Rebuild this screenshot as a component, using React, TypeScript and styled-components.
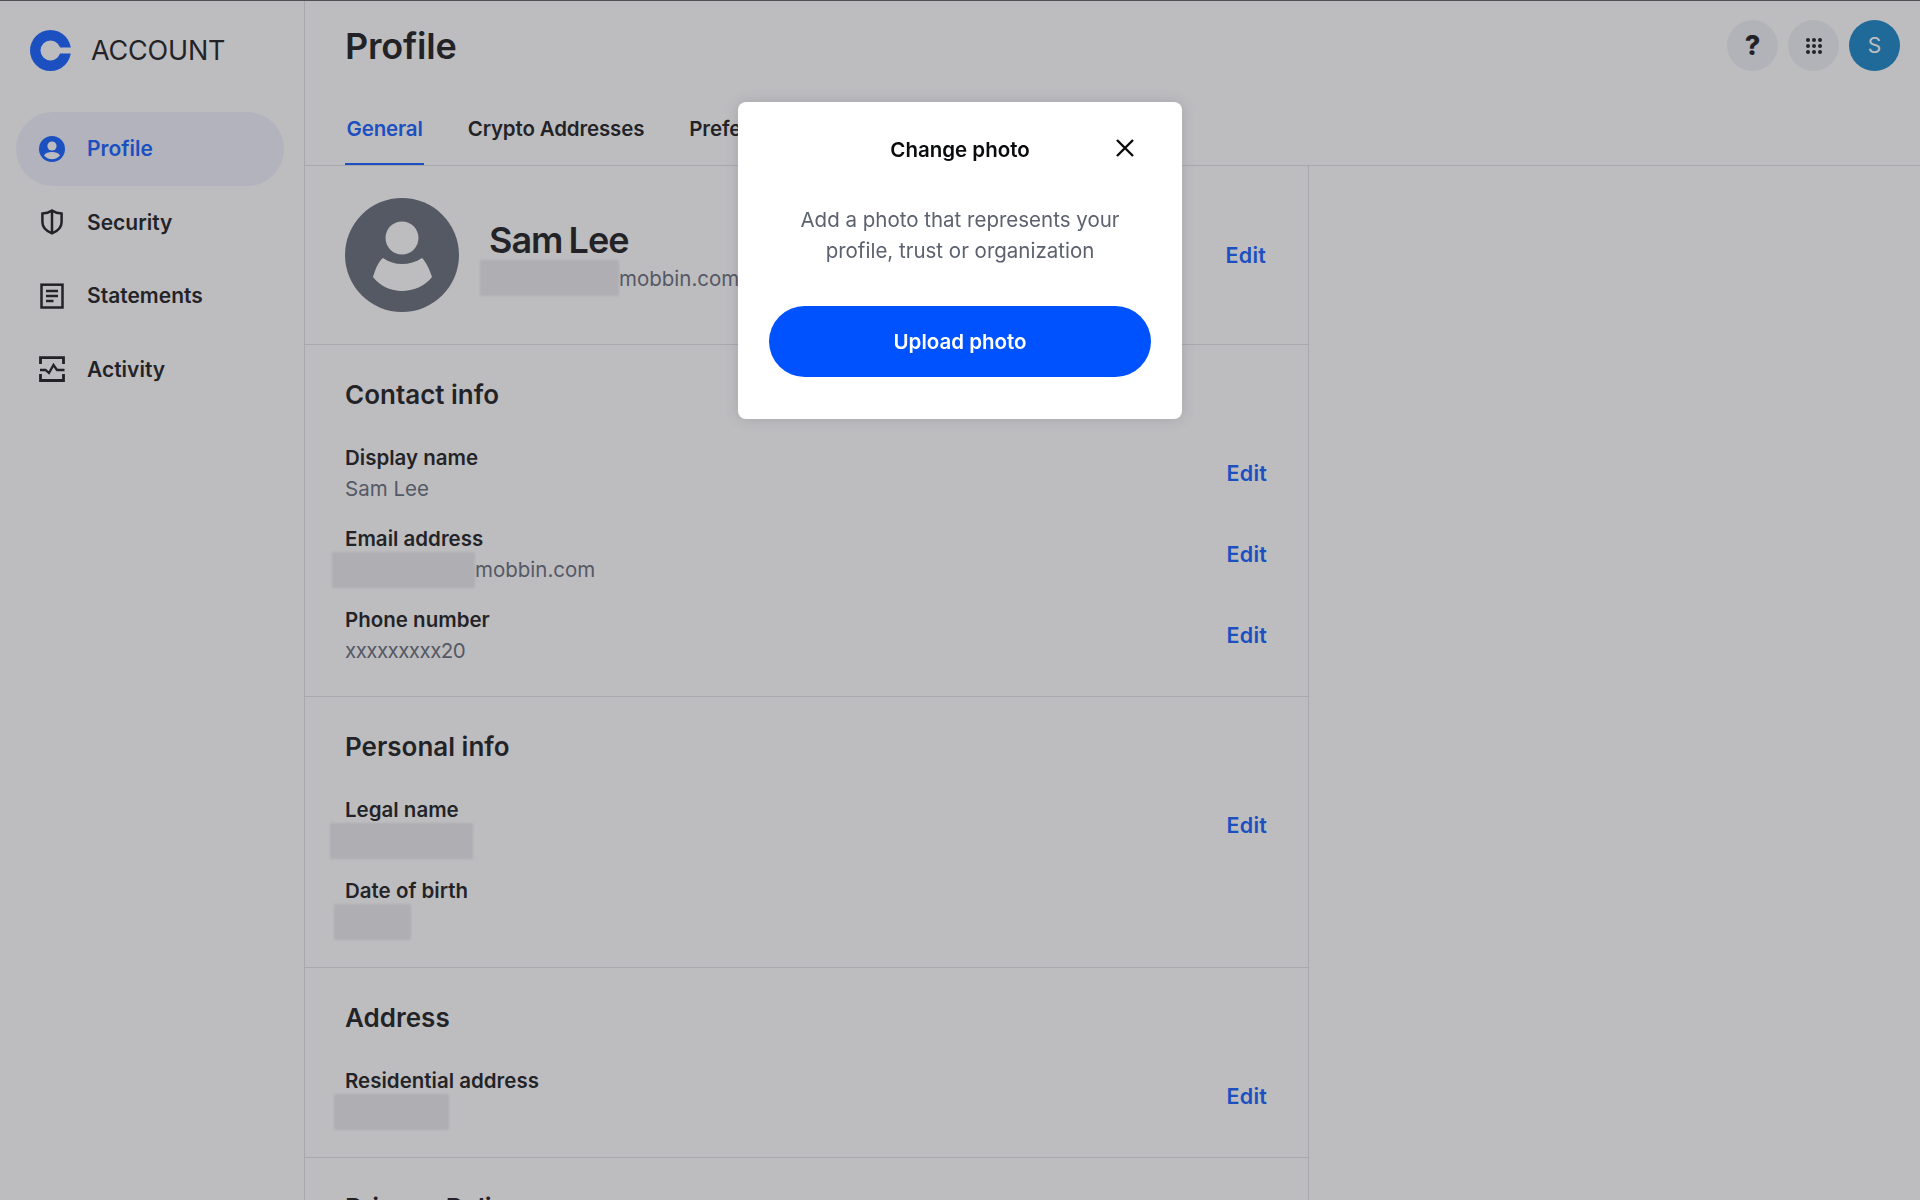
import styled, { createGlobalStyle } from "styled-components";

const GlobalStyle = createGlobalStyle`
  html, body {
    margin: 0;
    padding: 0;
    height: 100%;
    overflow: hidden;
    background: #fff;
    font-family: Inter, "Liberation Sans", sans-serif;
    color: #0a0b0d;
  }
  * { box-sizing: border-box; }
`;

const Page = styled.div`
  display: flex;
  width: 1920px;
  height: 1200px;
  overflow: hidden;
  border-top: 1px solid #525254;
`;

const Sidebar = styled.aside`
  width: 305px;
  flex-shrink: 0;
  border-right: 1px solid #dedfe2;
  padding: 29px 0 0 16px;
`;

const Brand = styled.div`
  display: flex;
  align-items: center;
  gap: 20px;
  height: 41px;
  padding-left: 14px;
  margin-bottom: 41px;
`;

const BrandName = styled.span`
  font-size: 27px;
  font-weight: 400;
  letter-spacing: -0.2px;
`;

const Nav = styled.nav`
  display: flex;
  flex-direction: column;
`;

const NavItem = styled.a<{ $active?: boolean }>`
  display: flex;
  align-items: center;
  gap: 22px;
  width: 268px;
  height: 73.5px;
  padding-left: 23px;
  border-radius: 37px;
  font-size: 21px;
  font-weight: 600;
  color: ${({ $active }) => ($active ? "#0052ff" : "#0a0b0d")};
  background: ${({ $active }) => ($active ? "#eef0fb" : "transparent")};
`;

const Main = styled.main`
  flex: 1;
  display: flex;
  flex-direction: column;
  min-width: 0;
`;

const Header = styled.header`
  display: flex;
  flex-shrink: 0;
  align-items: flex-start;
  justify-content: space-between;
  height: 103px;
  padding: 19px 20px 0 40px;
`;

const Title = styled.h1`
  margin: 0;
  font-size: 36px;
  line-height: 52px;
  font-weight: 600;
  letter-spacing: -0.2px;
`;

const Actions = styled.div`
  display: flex;
  gap: 10px;
`;

const RoundButton = styled.div<{ $accent?: boolean }>`
  display: flex;
  align-items: center;
  justify-content: center;
  width: 51px;
  height: 51px;
  border-radius: 50%;
  background: ${({ $accent }) => ($accent ? "#057cc1" : "#eef0f3")};
  color: ${({ $accent }) => ($accent ? "#fff" : "#0a0b0d")};
  font-size: ${({ $accent }) => ($accent ? "21px" : "27px")};
  font-weight: ${({ $accent }) => ($accent ? 400 : 800)};
`;

const Tabs = styled.div`
  display: flex;
  flex-shrink: 0;
  gap: 42px;
  height: 62px;
  padding-left: 40px;
  border-bottom: 1px solid #dedfe2;
`;

const Tab = styled.div<{ $active?: boolean }>`
  height: 61px;
  padding: 9px 1.5px 0;
  font-size: 20.5px;
  line-height: 32px;
  font-weight: 600;
  letter-spacing: -0.15px;
  white-space: nowrap;
  color: ${({ $active }) => ($active ? "#0052ff" : "#0a0b0d")};
  border-bottom: 2px solid ${({ $active }) => ($active ? "#0052ff" : "transparent")};
`;

const Content = styled.div`
  flex-shrink: 0;
  width: 1004px;
  border-right: 1px solid #dedfe2;
`;

const ProfileCard = styled.section`
  display: flex;
  align-items: center;
  height: 179px;
  padding: 0 42px 0 40px;
  border-bottom: 1px solid #dedfe2;
`;

const ProfileInfo = styled.div`
  flex: 1;
  margin-left: 30px;
`;

const ProfileName = styled.div`
  font-size: 36px;
  line-height: 46px;
  font-weight: 600;
  letter-spacing: -1px;
  word-spacing: -2px;
`;

const Section = styled.section`
  padding: 34px 41px 30px 40px;
  border-bottom: 1px solid #dedfe2;
`;

const SectionTitle = styled.h2<{ $flush?: boolean }>`
  margin: 0 0 ${({ $flush }) => ($flush ? 0 : "31px")};
  font-size: 26px;
  line-height: 32px;
  font-weight: 600;
`;

const Rows = styled.div`
  display: flex;
  flex-direction: column;
  gap: 19px;
`;

const Row = styled.div`
  display: flex;
  align-items: center;
  justify-content: space-between;
`;

const Label = styled.div`
  font-size: 20.5px;
  line-height: 31px;
  font-weight: 600;
`;

const Value = styled.div<{ $tight?: boolean }>`
  display: flex;
  align-items: center;
  height: 31px;
  font-size: 20.5px;
  letter-spacing: ${({ $tight }) => ($tight ? "-0.55px" : "0")};
  color: #5b616e;
  white-space: nowrap;
`;

const Redacted = styled.span<{ $width: number; $shift: number }>`
  flex-shrink: 0;
  width: ${({ $width }) => $width}px;
  height: 36px;
  margin-left: ${({ $shift }) => $shift}px;
  background: #e9e9ea;
  filter: blur(1px);
`;

const EditLink = styled.a`
  font-size: 21.5px;
  font-weight: 600;
  letter-spacing: 0.2px;
  color: #0052ff;
`;

const Overlay = styled.div`
  position: fixed;
  inset: 0;
  display: flex;
  justify-content: center;
  align-items: flex-start;
  padding-top: 102px;
  background: rgba(76, 76, 85, 0.37);
`;

const Modal = styled.div`
  width: 444px;
  height: 317px;
  padding: 0 31px;
  border-radius: 8px;
  background: #fff;
  box-shadow: 0 0 14px rgba(60, 60, 70, 0.18);
`;

const ModalHeader = styled.div`
  position: relative;
  display: flex;
  align-items: center;
  justify-content: center;
  height: 94px;
`;

const ModalTitle = styled.div`
  font-size: 20.5px;
  font-weight: 600;
`;

const CloseButton = styled.div`
  position: absolute;
  right: 16px;
  top: 36px;
  display: flex;
`;

const ModalText = styled.p`
  margin: 8px 0 40px;
  font-size: 20.5px;
  line-height: 31px;
  text-align: center;
  color: #5b616e;
`;

const UploadButton = styled.div`
  display: flex;
  align-items: center;
  justify-content: center;
  height: 71px;
  border-radius: 36px;
  background: #0052ff;
  color: #fff;
  font-size: 20.5px;
  font-weight: 600;
`;

const Logo = () => (
  <svg width="41" height="41" viewBox="0 0 41 41">
    <circle cx="20.5" cy="20.5" r="20.5" fill="#0052ff" />
    <circle cx="20.5" cy="20.5" r="10" fill="#fff" />
    <rect x="27" y="17.5" width="15" height="6" fill="#fff" />
  </svg>
);

const ProfileIcon = () => (
  <svg width="26" height="26" viewBox="0 0 26 26">
    <circle cx="13" cy="13" r="13" fill="#0052ff" />
    <circle cx="13" cy="10" r="4.6" fill="#fff" />
    <path d="M5 19.5c1.5-2.6 4.500-3.500 8-3.500s6.500.9 8 3.500c-2 2.300-5 3.700-8 3.700s-6-1.400-8-3.700z" fill="#fff" />
  </svg>
);

const ShieldIcon = () => (
  <svg width="26" height="26" viewBox="0 0 26 26" fill="none" stroke="#0a0b0d" strokeWidth="2.500">
    <path d="M13 1.600c3 1.900 6 2.800 9.600 3v8.400c0 5.300-3.600 9-9.600 11.400C7 22 3.400 18.300 3.400 13V4.600c3.600-.2 6.600-1.100 9.600-3z" />
    <path d="M13 2v22" />
  </svg>
);

const StatementIcon = () => (
  <svg width="26" height="26" viewBox="0 0 26 26" fill="none" stroke="#0a0b0d" strokeWidth="2.500">
    <rect x="2.500" y="1.700" width="21" height="22.800" />
    <path d="M7 8h12M7 13h12M7 18h7.500" />
  </svg>
);

const ActivityIcon = () => (
  <svg width="26" height="26" viewBox="0 0 26 26" fill="none" stroke="#0a0b0d" strokeWidth="2.800">
    <path d="M1.500 8V1.700h23V8M1.500 18v6.500h23V18" />
    <path d="M1 14h5.500l3.500 3 4.500-8 3.500 5h7.500" strokeWidth="2.300" />
  </svg>
);

const GridIcon = () => (
  <svg width="16" height="16" viewBox="0 0 16 16" fill="#0a0b0d">
    {[2, 8, 14].map((y) =>
      [2, 8, 14].map((x) => <circle key={`${x}-${y}`} cx={x} cy={y} r="2" />)
    )}
  </svg>
);

const CloseIcon = () => (
  <svg width="20" height="20" viewBox="0 0 20 20" stroke="#0a0b0d" strokeWidth="2.400">
    <path d="M2 2l16 16M18 2L2 18" />
  </svg>
);

const AvatarIcon = () => (
  <svg width="114" height="114" viewBox="0 0 114 114">
    <circle cx="57" cy="57" r="57" fill="#5b616e" />
    <circle cx="57" cy="40" r="16.500" fill="#fff" />
    <path
      d="M28 79C31 70 33 64 38 60C44 64 50 66 57 66C64 66 71 64 77 60C81 64 84 70 87 79C80 88 68 93 57 93C46 93 35 88 28 79Z"
      fill="#fff"
    />
  </svg>
);

const App = () => {
  return (
    <>
      <GlobalStyle />
      <Page>
        <Sidebar>
          <Brand>
            <Logo />
            <BrandName>ACCOUNT</BrandName>
          </Brand>
          <Nav>
            <NavItem $active>
              <ProfileIcon />
              Profile
            </NavItem>
            <NavItem>
              <ShieldIcon />
              Security
            </NavItem>
            <NavItem>
              <StatementIcon />
              Statements
            </NavItem>
            <NavItem>
              <ActivityIcon />
              Activity
            </NavItem>
          </Nav>
        </Sidebar>
        <Main>
          <Header>
            <Title>Profile</Title>
            <Actions>
              <RoundButton>?</RoundButton>
              <RoundButton>
                <GridIcon />
              </RoundButton>
              <RoundButton $accent>S</RoundButton>
            </Actions>
          </Header>
          <Tabs>
            <Tab $active>General</Tab>
            <Tab>Crypto Addresses</Tab>
            <Tab>Preferences</Tab>
          </Tabs>
          <Content>
            <ProfileCard>
              <AvatarIcon />
              <ProfileInfo>
                <ProfileName>Sam Lee</ProfileName>
                <Value>
                  <Redacted $width={139} $shift={-9} />
                  mobbin.com
                </Value>
              </ProfileInfo>
              <EditLink>Edit</EditLink>
            </ProfileCard>
            <Section>
              <SectionTitle>Contact info</SectionTitle>
              <Rows>
                <Row>
                  <div>
                    <Label>Display name</Label>
                    <Value>Sam Lee</Value>
                  </div>
                  <EditLink>Edit</EditLink>
                </Row>
                <Row>
                  <div>
                    <Label>Email address</Label>
                    <Value>
                      <Redacted $width={143} $shift={-13} />
                      mobbin.com
                    </Value>
                  </div>
                  <EditLink>Edit</EditLink>
                </Row>
                <Row>
                  <div>
                    <Label>Phone number</Label>
                    <Value $tight>xxxxxxxxx20</Value>
                  </div>
                  <EditLink>Edit</EditLink>
                </Row>
              </Rows>
            </Section>
            <Section>
              <SectionTitle>Personal info</SectionTitle>
              <Rows>
                <Row>
                  <div>
                    <Label>Legal name</Label>
                    <Value>
                      <Redacted $width={143} $shift={-15} />
                    </Value>
                  </div>
                  <EditLink>Edit</EditLink>
                </Row>
                <Row>
                  <div>
                    <Label>Date of birth</Label>
                    <Value>
                      <Redacted $width={77} $shift={-11} />
                    </Value>
                  </div>
                </Row>
              </Rows>
            </Section>
            <Section>
              <SectionTitle>Address</SectionTitle>
              <Rows>
                <Row>
                  <div>
                    <Label>Residential address</Label>
                    <Value>
                      <Redacted $width={115} $shift={-11} />
                    </Value>
                  </div>
                  <EditLink>Edit</EditLink>
                </Row>
              </Rows>
            </Section>
            <Section>
              <Row>
                <SectionTitle $flush>Privacy Policy</SectionTitle>
                <EditLink>Read</EditLink>
              </Row>
            </Section>
          </Content>
        </Main>
      </Page>
      <Overlay>
        <Modal>
          <ModalHeader>
            <ModalTitle>Change photo</ModalTitle>
            <CloseButton>
              <CloseIcon />
            </CloseButton>
          </ModalHeader>
          <ModalText>
            Add a photo that represents your
            <br />
            profile, trust or organization
          </ModalText>
          <UploadButton>Upload photo</UploadButton>
        </Modal>
      </Overlay>
    </>
  );
};

export default App;
